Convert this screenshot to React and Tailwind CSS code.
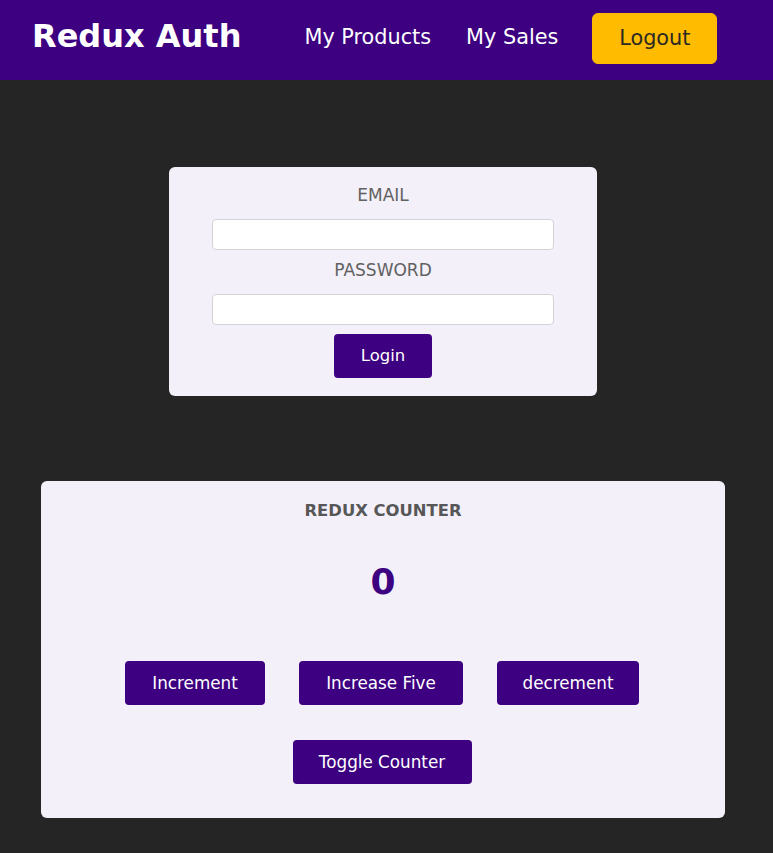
export default function App() {
  const font = { fontFamily: '"DejaVu Sans", Verdana, sans-serif' };
  return (
    <div className="min-h-[853px] w-full bg-[#252525] pb-[35px]" style={font}>
      <header className="flex h-[80px] items-center bg-[#3c0080] pl-[32px]">
        <h1 className="m-0 text-[32px] font-bold leading-none text-white -mt-[9px]">Redux Auth</h1>
        <nav className="ml-[63px] flex items-center">
          <a className="-mt-[6px] text-[20.8px] leading-none text-white">My Products</a>
          <a className="-mt-[6px] ml-[35px] text-[20.8px] leading-none text-white">My Sales</a>
          <button className="ml-[34px] flex h-[51px] w-[125px] items-center justify-center rounded-[6px] border border-[#ffbb00] bg-[#ffbb00] text-[20.8px] text-[#2c2922] -mt-[3px]">
            Logout
          </button>
        </nav>
      </header>

      <main>
        <section className="ml-[169px] mt-[87px] flex h-[229px] w-[428px] flex-col items-center rounded-[6px] bg-[#f3f0fa] px-[43px] pt-[16px]">
          <label className="block h-[24px] text-[17px] leading-[24px] text-[#616161]">EMAIL</label>
          <input className="mt-[12px] h-[31px] w-[342px] rounded-[4px] border border-[#d4d4d8] bg-white" />
          <label className="mt-[8px] block h-[24px] text-[17px] leading-[24px] text-[#616161]">PASSWORD</label>
          <input type="password" className="mt-[12px] h-[31px] w-[342px] rounded-[4px] border border-[#d4d4d8] bg-white" />
          <button className="mt-[9px] flex h-[44px] w-[98px] items-center justify-center rounded-[4px] bg-[#3c0080] text-[16.5px] text-white">
            Login
          </button>
        </section>

        <section className="ml-[41px] mt-[85px] flex h-[337px] w-[684px] flex-col items-center rounded-[6px] bg-[#f3f0fa] pt-[18px]">
          <h2 className="m-0 h-[24px] text-[16.4px] font-bold uppercase leading-[24px] text-[#575757]">Redux Counter</h2>
          <div className="mt-[41px] h-[36px] text-[36px] font-bold leading-[36px] text-[#3c0080]">0</div>
          <div className="mt-[61px] mr-[2px] flex gap-[34px]">
            <button className="flex h-[44px] w-[140px] items-center justify-center rounded-[4px] bg-[#3c0080] pt-[2px] text-[16.8px] text-white">Increment</button>
            <button className="flex h-[44px] w-[164px] items-center justify-center rounded-[4px] bg-[#3c0080] pt-[2px] text-[16.8px] text-white">Increase Five</button>
            <button className="flex h-[44px] w-[142px] items-center justify-center rounded-[4px] bg-[#3c0080] pt-[2px] text-[16.8px] text-white">decrement</button>
          </div>
          <button className="mt-[35px] mr-[2px] flex h-[44px] w-[179px] items-center justify-center rounded-[4px] bg-[#3c0080] pt-[2px] text-[16.8px] text-white">
            Toggle Counter
          </button>
        </section>
      </main>
    </div>
  );
}
